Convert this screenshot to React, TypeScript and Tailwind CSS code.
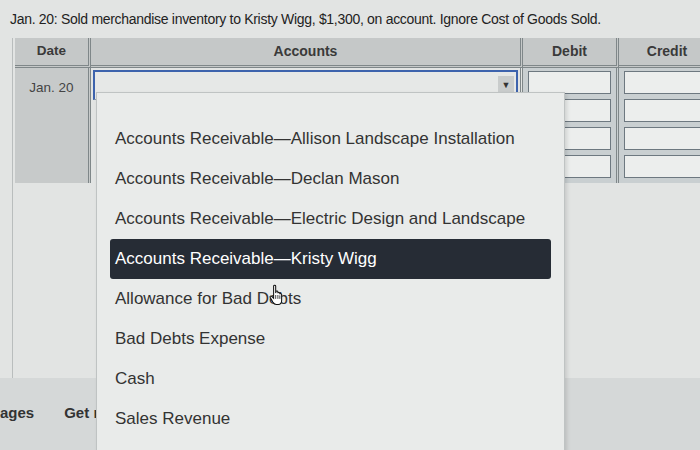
import React from 'react';

const options = [
  'Accounts Receivable\u2014Allison Landscape Installation',
  'Accounts Receivable\u2014Declan Mason',
  'Accounts Receivable\u2014Electric Design and Landscape',
  'Accounts Receivable\u2014Kristy Wigg',
  'Allowance for Bad Debts',
  'Bad Debts Expense',
  'Cash',
  'Sales Revenue',
];

const SELECTED = 3;

function HandCursor() {
  return (
    <svg width="19" height="22" viewBox="0 0 14 17" className="absolute left-[158px] top-[5px]">
      <path
        d="M4 1.5c0-.8 1.6-.8 1.6 0V7l.2-1c0-.8 1.5-.8 1.5 0v1.2c0-.8 1.5-.8 1.5 0V8c0-.7 1.4-.7 1.4 0v4.5c0 1.8-1 3.3-2.6 3.3H6c-1.2 0-2-.8-2.6-1.8L1.3 10.3c-.4-.8.6-1.4 1.2-.8L4 11V1.5z"
        fill="#fff"
        stroke="#111"
        strokeWidth="0.8"
      />
      <path d="M5.6 8.5v3M7.3 8.5v3M8.8 8.8v2.7" stroke="#111" strokeWidth="0.6" />
    </svg>
  );
}

function AmountInput() {
  return <div className="h-[23px] mx-[5px] border border-[#6d7880] bg-[#eceeed]" />;
}

export default function App() {
  return (
    <div className="relative w-[700px] h-[450px] overflow-hidden bg-[#e2e4e3] font-['Liberation_Sans',Arial,sans-serif] text-[#2b2b2b]">
      <div className="pl-[10px] pt-[9px] h-[38px] text-[14px] tracking-[-0.3px] text-[#222]">
        Jan. 20: Sold merchandise inventory to Kristy Wigg, $1,300, on account. Ignore Cost of Goods Sold.
      </div>

      <div className="ml-[12px] border-l border-[#b9bdbd] h-[340px]">
        <div className="ml-[2px] grid grid-cols-[76px_432px_96px_96px] w-[700px]">
          {/* header */}
          <div className="h-[30px] bg-[#c5c8c8] border-r-[3px] border-b-[3px] border-double border-[#7f8789] flex items-center justify-center text-[13.5px] font-bold text-[#3a3a3a]">
            Date
          </div>
          <div className="h-[30px] bg-[#c5c8c8] border-r-[3px] border-b-[3px] border-double border-[#7f8789] flex items-center justify-center text-[14px] font-bold text-[#3a3a3a]">
            Accounts
          </div>
          <div className="h-[30px] bg-[#c5c8c8] border-r-[3px] border-b-[3px] border-double border-[#7f8789] flex items-center justify-center text-[14px] font-bold text-[#3a3a3a]">
            Debit
          </div>
          <div className="h-[30px] bg-[#c5c8c8] border-b-[3px] border-double border-[#7f8789] flex items-center justify-center text-[14px] font-bold text-[#3a3a3a]">
            Credit
          </div>

          {/* body */}
          <div className="h-[115px] bg-[#c7caca] border-r-[3px] border-double border-[#7f8789] pt-[10px] text-center text-[13.5px] text-[#444]">
            Jan. 20
          </div>
          <div className="h-[115px] border-r-[3px] border-double border-[#7f8789] pt-[2px] pl-[2px] pr-[2px]">
            <div className="h-[30px] border-2 border-[#3d63ad] border-b-[#8a9aa8] border-b bg-[#e6e8e7] flex items-center justify-end pr-[2px]">
              <div className="w-[16px] h-[20px] bg-[#c9cccc] flex items-center justify-center text-[9px] text-[#333]">
                ▼
              </div>
            </div>
          </div>
          <div className="h-[115px] bg-[#c9cfd1] border-r-[3px] border-double border-[#7f8789] pt-[3px] flex flex-col gap-[5px]">
            <AmountInput />
            <AmountInput />
            <AmountInput />
            <AmountInput />
          </div>
          <div className="h-[115px] bg-[#c9cfd1] pt-[3px] flex flex-col gap-[5px]">
            <AmountInput />
            <AmountInput />
            <AmountInput />
            <AmountInput />
          </div>
        </div>
      </div>

      {/* page footer */}
      <div className="h-[72px] bg-[#d5d8d8] flex items-center pb-[2px] text-[15px] font-bold text-[#333]">
        <div className="w-[96px] overflow-hidden whitespace-nowrap flex gap-[30px]">
          <span className="ml-[-10px]">Pages</span>
          <span>Get more help</span>
        </div>
      </div>

      {/* dropdown */}
      <div className="absolute left-[96px] top-[92px] w-[469px] h-[380px] bg-[#e9ebea] border border-[#bfc3c3] shadow-[2px_2px_4px_rgba(0,0,0,0.12)] pt-[26px]">
        {options.map((opt, i) => (
          <div
            key={opt}
            className={
              i === SELECTED
                ? 'relative h-[40px] mx-[13px] px-[5px] flex items-center rounded-[3px] bg-[#262c35] text-white text-[17px]'
                : 'relative h-[40px] mx-[13px] px-[5px] flex items-center text-[#333] text-[17px]'
            }
          >
            {opt}
            {i === 4 && <HandCursor />}
          </div>
        ))}
      </div>
    </div>
  );
}
